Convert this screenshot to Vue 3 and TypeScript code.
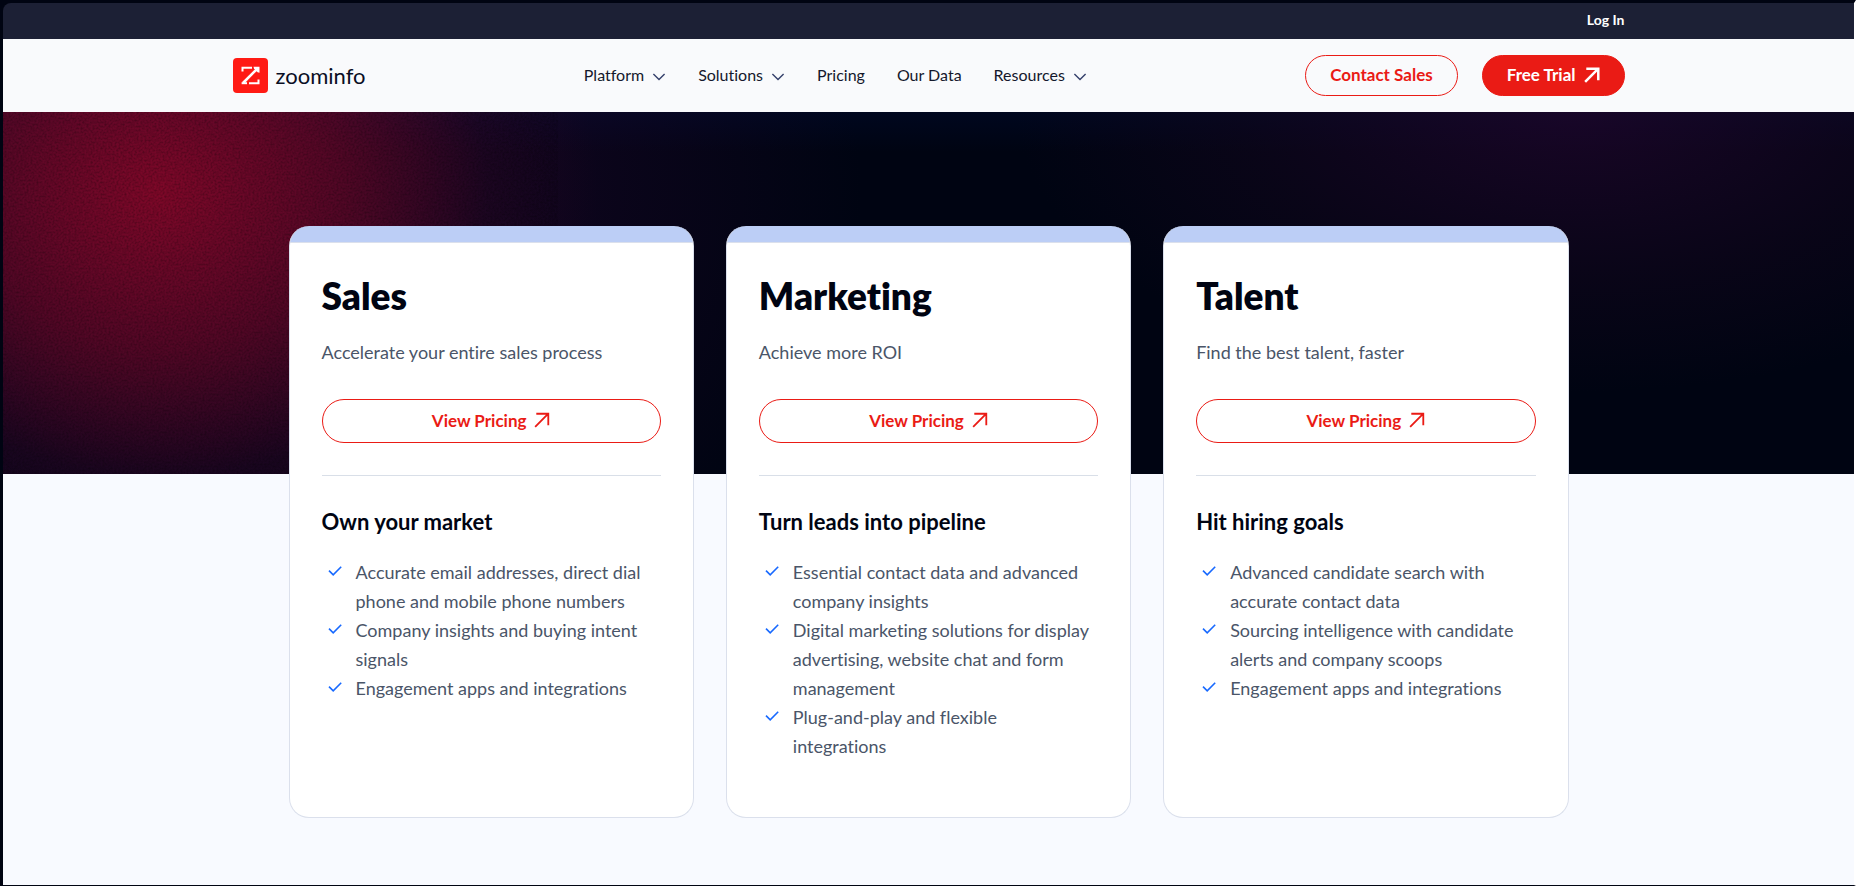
<script setup lang="ts">
interface NavItem {
  label: string
  menu: boolean
}

interface Plan {
  name: string
  tagline: string
  heading: string
  features: string[]
}

const navItems: NavItem[] = [
  { label: 'Platform', menu: true },
  { label: 'Solutions', menu: true },
  { label: 'Pricing', menu: false },
  { label: 'Our Data', menu: false },
  { label: 'Resources', menu: true },
]

const plans: Plan[] = [
  {
    name: 'Sales',
    tagline: 'Accelerate your entire sales process',
    heading: 'Own your market',
    features: [
      'Accurate email addresses, direct dial phone and mobile phone numbers',
      'Company insights and buying intent signals',
      'Engagement apps and integrations',
    ],
  },
  {
    name: 'Marketing',
    tagline: 'Achieve more ROI',
    heading: 'Turn leads into pipeline',
    features: [
      'Essential contact data and advanced company insights',
      'Digital marketing solutions for display advertising, website chat and form management',
      'Plug-and-play and flexible integrations',
    ],
  },
  {
    name: 'Talent',
    tagline: 'Find the best talent, faster',
    heading: 'Hit hiring goals',
    features: [
      'Advanced candidate search with accurate contact data',
      'Sourcing intelligence with candidate alerts and company scoops',
      'Engagement apps and integrations',
    ],
  },
]
</script>

<template>
  <div class="page">
    <div class="topbar">
      <div class="container topbar-row">
        <a class="login" href="#login">Log In</a>
      </div>
    </div>

    <header class="header">
      <div class="container header-row">
        <a class="brand" href="#home">
          <svg class="brand-mark" viewBox="0 0 35 35" aria-hidden="true">
            <rect width="35" height="35" rx="4" fill="#ff1a14" />
            <g fill="none" stroke="#fff" stroke-width="2">
              <path d="M9.5 13.5V9.7H19" />
              <path d="M16 25.2H25.5V21.4" />
              <path d="M10 25L24 11" stroke-width="2.6" />
              <path d="M8.6 25.2H14" />
            </g>
            <path d="M20.5 8.7H26.5V14.7L24.6 14.2L21 10.6Z" fill="#fff" />
          </svg>
          <span class="brand-name">zoominfo</span>
        </a>

        <nav class="nav" aria-label="Main">
          <template v-for="item in navItems" :key="item.label">
            <button v-if="item.menu" class="nav-item" type="button">
              {{ item.label }}
              <svg class="chevron" viewBox="0 0 14 8" aria-hidden="true">
                <path d="M1.4 1L7 6.6L12.6 1" fill="none" stroke="#35406b" stroke-width="1.4" />
              </svg>
            </button>
            <a v-else class="nav-item" :href="'#' + item.label">{{ item.label }}</a>
          </template>
        </nav>

        <div class="actions">
          <a class="pill pill-outline" href="#contact">Contact Sales</a>
          <a class="pill pill-solid" href="#trial">
            Free Trial
            <svg class="arrow" viewBox="0 0 14 14" aria-hidden="true">
              <path d="M2 1.5H12.5V11.5M12.5 1.5L1 13" fill="none" stroke="currentColor" stroke-width="2.2" />
            </svg>
          </a>
        </div>
      </div>
    </header>

    <main class="main">
      <svg class="grain" aria-hidden="true">
        <filter id="grain">
          <feTurbulence type="fractalNoise" baseFrequency="0.5" numOctaves="2" />
          <feColorMatrix values="0 0 0 0 0  0 0 0 0 0  0 0 0 0 0  1.6 0 0 0 -0.6" />
        </filter>
        <rect width="100%" height="100%" filter="url(#grain)" />
      </svg>

      <div class="plans">
        <article v-for="plan in plans" :key="plan.name" class="card">
          <h2 class="card-title">{{ plan.name }}</h2>
          <p class="tagline">{{ plan.tagline }}</p>
          <a class="pricing" :href="'#' + plan.name">
            View Pricing
            <svg class="arrow" viewBox="0 0 14 14" aria-hidden="true">
              <path d="M2 1.5H12.5V11.5M12.5 1.5L1 13" fill="none" stroke="currentColor" stroke-width="1.6" />
            </svg>
          </a>
          <hr class="rule" />
          <h3 class="card-heading">{{ plan.heading }}</h3>
          <ul class="features">
            <li v-for="feature in plan.features" :key="feature" class="feature">
              <svg class="check" viewBox="0 0 14 10" aria-hidden="true">
                <path d="M1 4.6L5.2 8.8L13.2 0.8" fill="none" stroke="#1769ff" stroke-width="1.6" />
              </svg>
              <span>{{ feature }}</span>
            </li>
          </ul>
        </article>
      </div>
    </main>
  </div>
</template>

<style>
body {
  margin: 0;
  background: #000412;
}
</style>

<style scoped>
.page {
  box-sizing: border-box;
  display: flex;
  flex-direction: column;
  min-height: 100vh;
  border: solid #000412;
  border-width: 3px 2px 1px 3px;
  border-right-color: #ffffff;
  font-family: Lato, 'Open Sans', sans-serif;
  font-variant-ligatures: none;
  color: #000412;
}

.container {
  box-sizing: border-box;
  width: 100%;
  max-width: 1392px;
  margin: 0 auto;
}

.topbar {
  background: #1c2035;
  border-radius: 8px 0 0;
}

.topbar-row {
  display: flex;
  justify-content: flex-end;
  padding-bottom: 2px;
}

.login {
  font-size: 14px;
  font-weight: 700;
  line-height: 34px;
  color: #ffffff;
  text-decoration: none;
}

.header {
  background: #f9fafc;
}

.header-row {
  display: flex;
  align-items: center;
  justify-content: space-between;
  height: 73px;
}

.brand {
  display: flex;
  align-items: center;
  gap: 8px;
  color: #0a0e24;
  text-decoration: none;
}

.brand-mark {
  width: 35px;
  height: 35px;
}

.brand-name {
  font-size: 22px;
  line-height: 32px;
}

.nav {
  display: flex;
  gap: 32px;
}

.nav-item {
  display: flex;
  align-items: center;
  gap: 8px;
  padding: 0 0 2px;
  border: 0;
  background: none;
  font: inherit;
  font-variant-ligatures: inherit;
  font-size: 16px;
  line-height: 24px;
  color: #14182c;
  text-decoration: none;
}

.chevron {
  width: 14px;
  height: 8px;
  margin-top: 4px;
}

.actions {
  display: flex;
  gap: 24px;
}

.pill {
  box-sizing: border-box;
  display: flex;
  align-items: center;
  gap: 8px;
  height: 41px;
  padding: 0 24px 2px;
  border: 1px solid #ea1b15;
  border-radius: 21px;
  font-size: 17px;
  font-weight: 700;
  text-decoration: none;
}

.pill-outline {
  color: #ea1b15;
}

.pill-solid {
  background: #ea1b15;
  color: #ffffff;
}

.arrow {
  width: 16px;
  height: 16px;
}

.main {
  position: relative;
  flex: 1;
  padding: 114px 32px 67px;
  background:
    radial-gradient(440px 380px at 155px 80px, rgba(134, 8, 40, 0.92), rgba(108, 8, 38, 0.68) 42%, rgba(62, 8, 40, 0.26) 75%, transparent) 0 0 / 100% 362px no-repeat,
    radial-gradient(700px 500px at 160px 80px, rgba(48, 6, 56, 0.6), transparent) 0 0 / 100% 362px no-repeat,
    radial-gradient(560px 280px at 85% 0, rgba(32, 6, 44, 0.75), rgba(20, 6, 30, 0.45) 60%, transparent) 0 0 / 100% 362px no-repeat,
    linear-gradient(#00071f, #000412 40px) 0 0 / 100% 362px no-repeat,
    #f8faff;
}

.grain {
  position: absolute;
  top: 0;
  left: 0;
  width: 30%;
  height: 362px;
  opacity: 0.35;
}

.plans {
  position: relative;
  display: grid;
  grid-template-columns: repeat(3, 1fr);
  gap: 32px;
  max-width: 1280px;
  margin: 0 auto;
}

.card {
  display: flex;
  flex-direction: column;
  padding: 32px 32px 56px;
  border: 1px solid #dbe0ec;
  border-top: 0;
  border-radius: 20px;
  background: linear-gradient(#bccef6 16px, #dbe0ec 16px, #dbe0ec 17px, #ffffff 17px);
}

.card-title {
  margin: 16px 0 0;
  font-size: 37px;
  font-weight: 800;
  line-height: 44px;
}

.tagline {
  margin: 20px 0 32px;
  font-size: 18px;
  line-height: 29px;
  color: #4a5568;
}

.pricing {
  box-sizing: border-box;
  display: flex;
  align-items: center;
  justify-content: center;
  gap: 8px;
  height: 44px;
  padding-bottom: 2px;
  border: 1px solid #ea1b15;
  border-radius: 22px;
  font-size: 17px;
  font-weight: 700;
  color: #ea1b15;
  text-decoration: none;
}

.rule {
  width: 100%;
  height: 1px;
  margin: 32px 0;
  border: 0;
  background: #d9dfe8;
}

.card-heading {
  margin: 0 0 22px;
  font-size: 22px;
  font-weight: 700;
  line-height: 28px;
}

.features {
  margin: 0;
  padding: 0 6px;
  list-style: none;
}

.feature {
  display: flex;
  gap: 14px;
  font-size: 18px;
  line-height: 29px;
  color: #4a5568;
}

.check {
  flex: none;
  width: 14px;
  height: 10px;
  margin-top: 8px;
}
</style>
